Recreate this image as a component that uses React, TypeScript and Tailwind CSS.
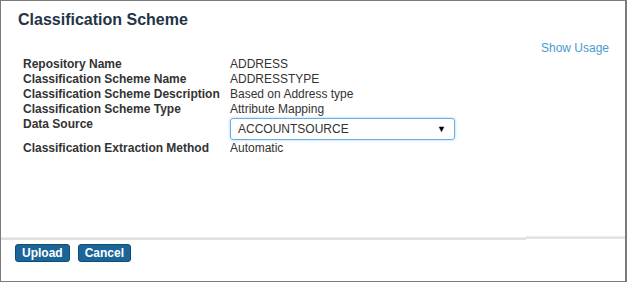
const rows: { label: string; value: string }[] = [
  { label: 'Repository Name', value: 'ADDRESS' },
  { label: 'Classification Scheme Name', value: 'ADDRESSTYPE' },
  { label: 'Classification Scheme Description', value: 'Based on Address type' },
  { label: 'Classification Scheme Type', value: 'Attribute Mapping' },
];

export default function App() {
  return (
    <div className="w-[627px] h-[283px] bg-white font-['Liberation_Sans',Arial,sans-serif] text-[#333]">
      <div className="w-[627px] h-[282px] border border-r-2 border-[#7b7b7b] flex flex-col">
        {/* Header */}
        <h1 className="pl-[17px] pt-[9px] text-[16px] leading-[20px] font-bold text-[#243447]">Classification Scheme</h1>

        <div className="flex justify-end pr-[16px] mt-[11px]">
          <a className="text-[12px] leading-[14px] text-[#4a9bd0] cursor-pointer">Show Usage</a>
        </div>

        {/* Details */}
        <div className="pl-[22px] mt-[2px] text-[12px] leading-[15px]">
          {rows.map((r) => (
            <div key={r.label} className="flex">
              <span className="w-[207px] shrink-0 font-bold">{r.label}</span>
              <span>{r.value}</span>
            </div>
          ))}
          <div className="flex h-[24px]">
            <span className="w-[207px] shrink-0 font-bold">Data Source</span>
            <div className="mt-[1px] w-[225px] h-[22px] rounded-[3px] border border-[#66afe9] shadow-[0_0_3px_rgba(102,175,233,0.6)] flex items-center justify-between pl-[7px] pr-[8px]">
              <span>ACCOUNTSOURCE</span>
              <span className="text-[9px] text-black">▼</span>
            </div>
          </div>
          <div className="flex">
            <span className="w-[207px] shrink-0 font-bold">Classification Extraction Method</span>
            <span>Automatic</span>
          </div>
        </div>

        <div className="flex-1" />

        {/* Footer */}
        <div className="flex">
          <div className="w-[525px] h-[3px] border-t border-[#ececec] bg-[#e0e0e0] translate-y-[1px]" />
          <div className="flex-1 h-[3px] border-t border-[#ececec] bg-[#e4e4e4]" />
        </div>
        <div className="flex gap-[8px] pl-[14px] pt-[5px] pb-[19px]">
          <button className="h-[18px] px-[6px] rounded-[3px] border border-[#0f4d75] bg-[#1b6598] text-white text-[12px] leading-[14px] font-bold">Upload</button>
          <button className="h-[18px] px-[6px] rounded-[3px] border border-[#0f4d75] bg-[#1b6598] text-white text-[12px] leading-[14px] font-bold">Cancel</button>
        </div>
      </div>
    </div>
  );
}
